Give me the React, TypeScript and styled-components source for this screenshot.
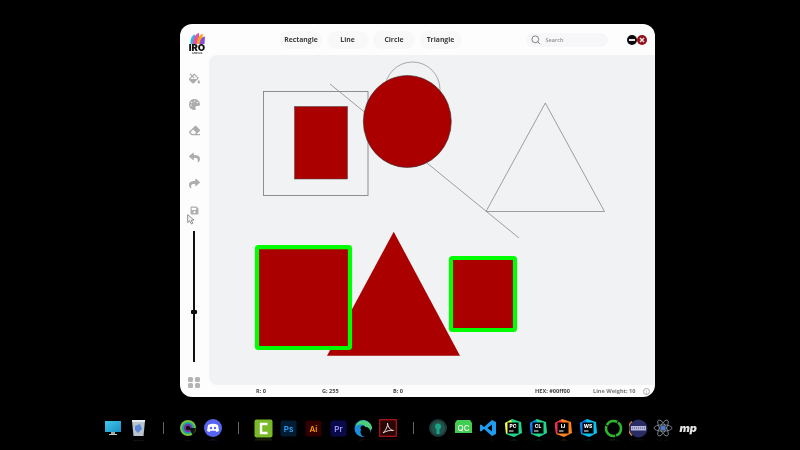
import React from "react";
import styled, { createGlobalStyle } from "styled-components";
import { FaEraser, FaFillDrip, FaPalette, FaReply, FaSave, FaShare } from "react-icons/fa";

const Global = createGlobalStyle`
  html, body { margin: 0; padding: 0; background: #000; }
  body { font-family: "Inter", "Liberation Sans", sans-serif; }
`;

const Desktop = styled.div`
  width: 800px;
  height: 450px;
  background: #000;
  overflow: hidden;
  padding-top: 24px;
  box-sizing: border-box;
  display: flex;
  flex-direction: column;
`;

const AppWindow = styled.div`
  position: relative;
  width: 475px;
  height: 373px;
  margin-left: 180px;
  background: #fdfdfd;
  border-radius: 12px;
  overflow: hidden;
  display: flex;
  flex-direction: column;
  will-change: transform;
`;

const TopBar = styled.header`
  height: 31px;
  flex: none;
  display: flex;
  align-items: center;
  padding-left: 8px;
`;

const Logo = styled.div`
  width: 18px;
  flex: none;
  align-self: flex-start;
  margin-top: 9px;
  display: flex;
  flex-direction: column;
  align-items: center;
`;

const LogoWord = styled.span`
  font: 900 9.5px/7px "Inter", sans-serif;
  color: #111;
`;

const LogoSub = styled.span`
  font: 700 2.5px/3px "Inter", sans-serif;
  color: #333;
  margin-top: 1.4px;
`;

const Tabs = styled.nav`
  display: flex;
  gap: 4.5px;
  margin-left: 74px;
`;

const Tab = styled.button`
  width: 42px;
  height: 18px;
  padding: 0;
  border: 0;
  border-radius: 9px;
  background: #f8f8f9;
  color: #3c3c3c;
  font: 700 6.8px/18px "Open Sans", sans-serif;
`;

const SearchBox = styled.div`
  width: 82px;
  height: 14px;
  margin-left: 64px;
  border-radius: 7px;
  background: #f7f6f9;
  display: flex;
  align-items: center;
  gap: 5px;
  padding-left: 5px;
  box-sizing: border-box;
  color: #8e8e8e;
  font: 600 5.5px/14px "Open Sans", sans-serif;
`;

const WindowControls = styled.div`
  display: flex;
  gap: 0;
  margin-left: 19px;
`;

const WindowButton = styled.span<{ $bg: string }>`
  width: 10px;
  height: 10px;
  border-radius: 50%;
  background: ${(p) => p.$bg};
  display: flex;
  align-items: center;
  justify-content: center;
`;

const Main = styled.div`
  flex: 1;
  display: flex;
  min-height: 0;
`;

const Sidebar = styled.aside`
  width: 29px;
  flex: none;
  display: flex;
  flex-direction: column;
  align-items: center;
  padding: 10px 1px 0 0;
  box-sizing: border-box;
`;

const ToolSlot = styled.div<{ $size?: number }>`
  width: 28px;
  height: 26.4px;
  flex: none;
  display: flex;
  align-items: center;
  justify-content: center;
  color: #adadad;
  font-size: ${(p) => p.$size ?? 11}px;
`;

const Slider = styled.div`
  position: relative;
  width: 2px;
  height: 131px;
  flex: none;
  margin-top: 7.6px;
  background: #111;
`;

const SliderThumb = styled.span`
  position: absolute;
  left: -2px;
  top: 79px;
  width: 6px;
  height: 4px;
  border-radius: 1px;
  background: #111;
`;

const GridButton = styled.div`
  flex: none;
  margin-top: 15px;
  display: grid;
  grid-template-columns: 5px 5px;
  gap: 1.5px;
`;

const GridCell = styled.span`
  width: 5px;
  height: 5px;
  border-radius: 1.5px;
  background: #b4b4b4;
`;

const Canvas = styled.svg`
  flex: 1;
  display: block;
  width: 446px;
  height: 330px;
  background: #f1f2f4;
  border-radius: 8px 0 0 8px;
`;

const StatusBar = styled.footer`
  height: 12px;
  flex: none;
  display: grid;
  grid-template-columns: 66px 71px 142px 58px 50px 8px;
  padding-left: 76px;
  box-sizing: border-box;
  align-items: center;
  color: #444;
  font: 700 5.6px/12px "Open Sans", sans-serif;
`;

const StatusItem = styled.span<{ $muted?: boolean }>`
  white-space: nowrap;
  color: ${(p) => (p.$muted ? "#777" : "#444")};
`;

const InfoIcon = styled.span`
  grid-column: 6;
  width: 7px;
  height: 7px;
  box-sizing: border-box;
  border: 0.7px solid #aaa;
  border-radius: 50%;
  color: #999;
  font: 500 5px/6px "Open Sans", sans-serif;
  text-align: center;
  display: block;
`;

const Pointer = styled.svg`
  position: absolute;
  left: 7px;
  top: 190px;
`;

const Dock = styled.div`
  width: 600px;
  margin: 21px 0 0 100.5px;
  display: flex;
`;

const DockSlot = styled.div`
  width: 25px;
  height: 20px;
  flex: none;
  display: flex;
  align-items: center;
  justify-content: center;
  -webkit-box-reflect: below 0 linear-gradient(transparent 82%, rgba(255, 255, 255, 0.3));
`;

const DockDivider = styled.span`
  width: 1px;
  height: 12px;
  background: #666;
`;

const DockWordmark = styled.span`
  font: italic 900 11px/12px "Inter", sans-serif;
  color: #e4e4e4;
  letter-spacing: -0.3px;
`;

const Box = ({ bg, fg, t, fs = 8 }: { bg: string; fg: string; t: string; fs?: number }) => (
  <svg width="17" height="17" viewBox="0 0 17 17">
    <rect x=".5" y=".5" width="16" height="16" rx="2.5" fill={bg} />
    <text x="8.5" y="11.5" textAnchor="middle" fontFamily="Inter, sans-serif" fontWeight="600" fontSize={fs} fill={fg}>{t}</text>
  </svg>
);

const JB = ({ a, b, t }: { a: string; b: string; t: string }) => (
  <svg width="18" height="18" viewBox="0 0 18 18">
    <path d="M1 4 L8 0 L17 3 L18 14 L10 18 L2 15Z" fill={a} />
    <path d="M1 4 L7 1 L10 9 L2 15Z" fill={b} />
    <rect x="3.5" y="3.5" width="11" height="11" fill="#000" />
    <text x="9" y="9" textAnchor="middle" fontFamily="Inter, sans-serif" fontWeight="800" fontSize="5" fill="#fff">{t}</text>
    <rect x="5" y="11.5" width="4.5" height="1" fill="#fff" />
  </svg>
);

const dockItems: React.ReactNode[] = [
  <svg width="18" height="18" viewBox="0 0 18 18"><defs><linearGradient id="mon" x1="0" y1="0" x2="1" y2="1"><stop offset="0" stopColor="#3fc8ec" /><stop offset="1" stopColor="#1b8fc4" /></linearGradient></defs><rect x="1" y="2" width="16" height="11" fill="url(#mon)" /><rect x="7" y="13" width="4" height="2" fill="#9aa" /><rect x="5" y="15" width="8" height="1" fill="#bcc" /></svg>,
  <svg width="15" height="19" viewBox="0 0 15 19"><path d="M1 2 H14 L12.5 17 H2.5Z" fill="#b9c3cc" /><path d="M4 7 L9 5 L11 10 L7 14 L4 11Z" fill="#5b86d8" /><rect x="1" y="1" width="13" height="2" fill="#e8ecef" /></svg>,
  "sep",
  <svg width="18" height="18" viewBox="0 0 18 18"><circle cx="9" cy="9" r="8" fill="#7bc043" /><circle cx="9" cy="9" r="6" fill="#18a39a" /><circle cx="9" cy="9" r="4.2" fill="#7b2fa8" /><circle cx="9" cy="9" r="2.2" fill="#111" /><path d="M10 9 L17 9 L14 17Z" fill="#111" /></svg>,
  <svg width="18" height="18" viewBox="0 0 18 18"><circle cx="9" cy="9" r="9" fill="#5865f2" /><path d="M4 6 Q9 3.6 14 6 L15 12 L12.5 13 L11.5 11.8 H6.5 L5.5 13 L3 12Z" fill="#fff" /><circle cx="7" cy="9" r="1.2" fill="#5865f2" /><circle cx="11" cy="9" r="1.2" fill="#5865f2" /></svg>,
  "sep",
  <svg width="19" height="19" viewBox="0 0 19 19"><rect x=".5" y=".5" width="18" height="18" rx="2" fill="#7ab929" /><path d="M13.5 5 H7 V14 H13.5" fill="none" stroke="#fff" strokeWidth="2.4" /></svg>,
  <Box bg="#001d34" fg="#31a8ff" t="Ps" />,
  <Box bg="#300" fg="#ff9a00" t="Ai" />,
  <Box bg="#0a0a4a" fg="#9a9cff" t="Pr" />,
  <svg width="19" height="19" viewBox="0 0 19 19"><circle cx="9" cy="9.5" r="8.5" fill="#1a8ed8" /><path d="M1.5 7 C4 0 15 -1 18 8 C18.5 12 13.5 13 11.5 11 C13 8 9 5 6 5.5 C4 6 3 6 1.5 7Z" fill="#4ccf7c" /><circle cx="11.5" cy="13" r="5" fill="#000" /><circle cx="9" cy="9" r="2.5" fill="#000" /></svg>,
  <svg width="18" height="18" viewBox="0 0 18 18"><rect x=".7" y=".7" width="16.6" height="16.6" fill="#2a0606" stroke="#b3151b" strokeWidth="1.2" /><path d="M4 14 C7 11 9 7 8.5 4 C9 8 11 11 14.5 11.5 C11 11 7 12 4 14Z" fill="none" stroke="#e9dede" strokeWidth="1" /></svg>,
  "sep",
  <svg width="18" height="18" viewBox="0 0 18 18"><circle cx="9" cy="9" r="9" fill="#1d3a36" /><circle cx="9" cy="9" r="7" fill="#24524b" /><circle cx="9" cy="7.5" r="3" fill="#17a589" /><rect x="7.5" y="9" width="3" height="6" fill="#17a589" /></svg>,
  <svg width="19" height="18" viewBox="0 0 19 18"><path d="M3 1 H16 L18 4 V14 H1 V4Z" fill="#41cd52" /><text x="9.5" y="11.5" textAnchor="middle" fontFamily="Inter, sans-serif" fontWeight="500" fontSize="8" fill="#fff">QC</text></svg>,
  <svg width="18" height="18" viewBox="0 0 18 18"><path d="M13 1 L17 3 V15 L13 17 L5 10 L2 12.5 L1 12 V6 L2 5.5 L5 8Z M13 5.5 L8.5 9 L13 12.5Z" fill="#1f9cf0" fillRule="evenodd" /></svg>,
  <JB a="#21d789" b="#fcf84a" t="PC" />,
  <JB a="#21d789" b="#087cfa" t="CL" />,
  <JB a="#fc801d" b="#fe2857" t="IJ" />,
  <JB a="#07c3f2" b="#087cfa" t="WS" />,
  <svg width="19" height="19" viewBox="0 0 19 19"><circle cx="9.5" cy="9.5" r="7.5" fill="none" stroke="#2fb52f" strokeWidth="2.6" strokeDasharray="9 1 16 1 12 1" /></svg>,
  <svg width="19" height="19" viewBox="0 0 19 19"><circle cx="9.5" cy="9.5" r="9" fill="#2a2c66" /><path d="M3 2.5 A9 9 0 0 0 3 16.5" fill="none" stroke="#d98a3d" strokeWidth="1.4" /><rect x="2" y="7" width="15" height="4.5" fill="#b5b8d8" /><path d="M3 9 H16" stroke="#4a4c80" strokeDasharray="1 1" /></svg>,
  <svg width="20" height="18" viewBox="0 0 20 18"><g fill="none" stroke="#8a94a0" strokeWidth=".8"><ellipse cx="10" cy="9" rx="9" ry="3.2" /><ellipse cx="10" cy="9" rx="9" ry="3.2" transform="rotate(60 10 9)" /><ellipse cx="10" cy="9" rx="9" ry="3.2" transform="rotate(120 10 9)" /></g><circle cx="10" cy="9" r="2.6" fill="#4f78c8" /></svg>,
  <DockWordmark>mp</DockWordmark>,
];

export default function App() {
  return (
    <Desktop>
      <Global />
      <AppWindow>
        <TopBar>
          <Logo>
            <svg width="15" height="11" viewBox="0 0 15 11">
              <path d="M0.5 11 C0 6 2 2 5 1.5 L6.5 11Z" fill="#35b6e8" />
              <path d="M3 11 C3 5 6 0.5 9 0 L9 11Z" fill="#f04fa0" />
              <path d="M7 11 C7 5 10 0.5 13 1 L11 11Z" fill="#f7a91e" />
              <path d="M9.5 11 C10 7 12 3.5 15 3.5 L14.5 11Z" fill="#8a4fd8" />
            </svg>
            <LogoWord>IRO</LogoWord>
            <LogoSub>CANVAS</LogoSub>
          </Logo>
          <Tabs>
            <Tab>Rectangle</Tab>
            <Tab>Line</Tab>
            <Tab>Circle</Tab>
            <Tab>Triangle</Tab>
          </Tabs>
          <SearchBox>
            <svg width="10" height="10" viewBox="0 0 10 10" fill="none" stroke="#666" strokeWidth=".8">
              <circle cx="4.3" cy="4.3" r="3.4" />
              <path d="M6.8 6.8 L9.2 9.2" />
            </svg>
            Search
          </SearchBox>
          <WindowControls>
            <WindowButton $bg="#0a0a0a">
              <svg width="6" height="2" viewBox="0 0 6 2"><rect width="6" height="2" fill="#e9e9e9" /></svg>
            </WindowButton>
            <WindowButton $bg="#96101a">
              <svg width="6" height="6" viewBox="0 0 6 6" stroke="#eee" strokeWidth="1.4"><path d="M1 1 L5 5 M5 1 L1 5" /></svg>
            </WindowButton>
          </WindowControls>
        </TopBar>
        <Main>
          <Sidebar>
            <ToolSlot><FaFillDrip /></ToolSlot>
            <ToolSlot><FaPalette /></ToolSlot>
            <ToolSlot><FaEraser /></ToolSlot>
            <ToolSlot><FaReply /></ToolSlot>
            <ToolSlot><FaShare /></ToolSlot>
            <ToolSlot $size={9}><FaSave /></ToolSlot>
            <Slider><SliderThumb /></Slider>
            <GridButton>
              <GridCell /><GridCell /><GridCell /><GridCell />
            </GridButton>
          </Sidebar>
          <Canvas viewBox="209 55 446 330">
            <rect x="263.5" y="91.5" width="104.5" height="104" fill="none" stroke="#777" strokeWidth=".8" />
            <line x1="330" y1="84" x2="519" y2="238" stroke="#888" strokeWidth=".8" />
            <circle cx="412.5" cy="89.5" r="27.5" fill="none" stroke="#888" strokeWidth=".7" />
            <rect x="294.5" y="106.5" width="53" height="72.5" fill="#aa0000" stroke="#444" strokeWidth=".5" />
            <ellipse cx="407.3" cy="121.5" rx="44" ry="46" fill="#aa0000" stroke="#333" strokeWidth=".6" />
            <path d="M545.3 103 L486 211.5 H604.5Z" fill="none" stroke="#888" strokeWidth=".8" />
            <path d="M393.7 231.7 L327 355.7 H460Z" fill="#aa0000" />
            <rect x="257" y="247.2" width="93" height="100.8" rx="1.5" fill="#aa0000" stroke="#00ff00" strokeWidth="4.2" />
            <rect x="451" y="258" width="64" height="72" rx="1.5" fill="#aa0000" stroke="#00ff00" strokeWidth="4.2" />
          </Canvas>
        </Main>
        <StatusBar>
          <StatusItem>R: 0</StatusItem>
          <StatusItem>G: 255</StatusItem>
          <StatusItem>B: 0</StatusItem>
          <StatusItem>HEX: #00ff00</StatusItem>
          <StatusItem $muted>Line Weight: 10</StatusItem>
          <InfoIcon>i</InfoIcon>
        </StatusBar>
        <Pointer width="8" height="11" viewBox="0 0 8 11">
          <path d="M0.7 0.7 V8.6 L2.7 6.9 L4.4 10 L5.8 9.2 L4.2 6.3 L7 6Z" fill="#f4f4f4" stroke="#666" strokeWidth=".7" />
        </Pointer>
      </AppWindow>
      <Dock>
        {dockItems.map((item, i) => (
          <DockSlot key={i}>{item === "sep" ? <DockDivider /> : item}</DockSlot>
        ))}
      </Dock>
    </Desktop>
  );
}
